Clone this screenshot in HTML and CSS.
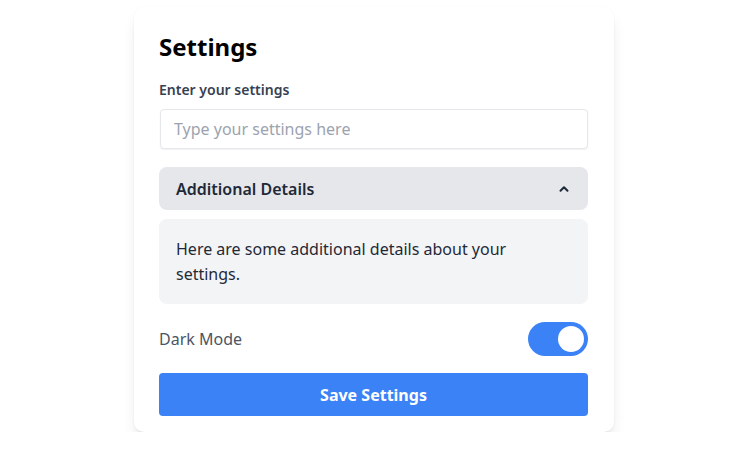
FILE: index.html
```html
<!DOCTYPE html>
<html lang="en">
<head>
<meta charset="UTF-8" />
<meta name="viewport" content="width=device-width, initial-scale=1" />
<title>Settings</title>
<link rel="stylesheet" href="styles.css">
</head>
<body>

  <!-- Settings card -->
  <div class="card">
    <h1 class="card-title">Settings</h1>

    <label class="field-label" for="settingsInput">Enter your settings</label>
    <input type="text" id="settingsInput" class="field-input" placeholder="Type your settings here" autocomplete="off" />

    <!-- Accordion -->
    <div class="accordion">
      <button class="accordion-head" type="button">
        <span>Additional Details</span>
        <svg class="chevron" width="12" height="12" viewBox="0 0 12 12" aria-hidden="true">
          <polyline points="2.5,7.8 6,4.3 9.5,7.8" fill="none" stroke="#1f2937" stroke-width="2" stroke-linecap="round" stroke-linejoin="round" />
        </svg>
      </button>
      <div class="accordion-body">
        Here are some additional details about your settings.
      </div>
    </div>

    <!-- Dark mode toggle -->
    <div class="toggle-row">
      <span class="toggle-label">Dark Mode</span>
      <span class="toggle on"><span class="toggle-thumb"></span></span>
    </div>

    <button class="save-btn" type="button">Save Settings</button>
  </div>

</body>
</html>
```

FILE: styles.css
```css
* {
  box-sizing: border-box;
}

body, html {
  margin: 0;
  padding: 0;
  background: #ffffff;
  font-family: "Noto Sans", "Open Sans", sans-serif;
  color: #1f2937;
}

body {
  /* card sits a hair left of center */
  padding-right: 2px;
}

.card {
  width: 480px;
  margin: 7px auto 0;
  padding: 24px 26px 16px 25px;
  background: #ffffff;
  border-radius: 10px;
  box-shadow: 0 10px 15px -3px rgba(0, 0, 0, 0.1), 0 4px 6px -4px rgba(0, 0, 0, 0.1), 0 0 2px rgba(0, 0, 0, 0.04);
}

.card-title {
  margin: 0 0 17px;
  font-size: 24px;
  line-height: 32px;
  font-weight: 700;
  color: #000000;
}

.field-label {
  display: block;
  margin-bottom: 9px;
  font-size: 14px;
  line-height: 20px;
  font-weight: 600;
  color: #374151;
}

.field-input {
  display: block;
  width: calc(100% - 1px);
  height: 40px;
  margin-left: 1px;
  padding: 0 13px;
  font-family: inherit;
  font-size: 16px;
  color: #1f2937;
  border: 1px solid #e5e7eb;
  border-radius: 4px;
  box-shadow: 0 1px 2px rgba(0, 0, 0, 0.06);
  outline: none;
}

.field-input::placeholder {
  color: #9ca3af;
}

/* Accordion */
.accordion {
  margin-top: 18px;
}

.accordion-head {
  display: flex;
  align-items: center;
  justify-content: space-between;
  width: 100%;
  height: 43px;
  padding: 0 18px 0 17px;
  background: #e5e7eb;
  border: none;
  border-radius: 8px;
  font-family: inherit;
  font-size: 16px;
  font-weight: 600;
  color: #1f2937;
  cursor: pointer;
}

.accordion-body {
  margin-top: 9px;
  padding: 18px 17px 17px;
  min-height: 85px;
  background: #f3f4f6;
  border-radius: 8px;
  font-size: 16px;
  line-height: 25px;
  color: #1f2937;
}

/* Toggle */
.toggle-row {
  display: flex;
  align-items: center;
  justify-content: space-between;
  margin-top: 18px;
}

.toggle-label {
  font-size: 16px;
  color: #4b5563;
}

.toggle {
  display: flex;
  align-items: center;
  justify-content: flex-end;
  width: 60px;
  height: 34px;
  padding: 0 4px;
  border-radius: 17px;
  background: #3b82f6;
}

.toggle-thumb {
  width: 26px;
  height: 26px;
  border-radius: 50%;
  background: #ffffff;
}

.save-btn {
  display: block;
  width: 100%;
  height: 43px;
  margin-top: 17px;
  background: #3b82f6;
  border: none;
  border-radius: 4px;
  font-family: inherit;
  font-size: 16px;
  font-weight: 700;
  color: #ffffff;
  cursor: pointer;
}
```
